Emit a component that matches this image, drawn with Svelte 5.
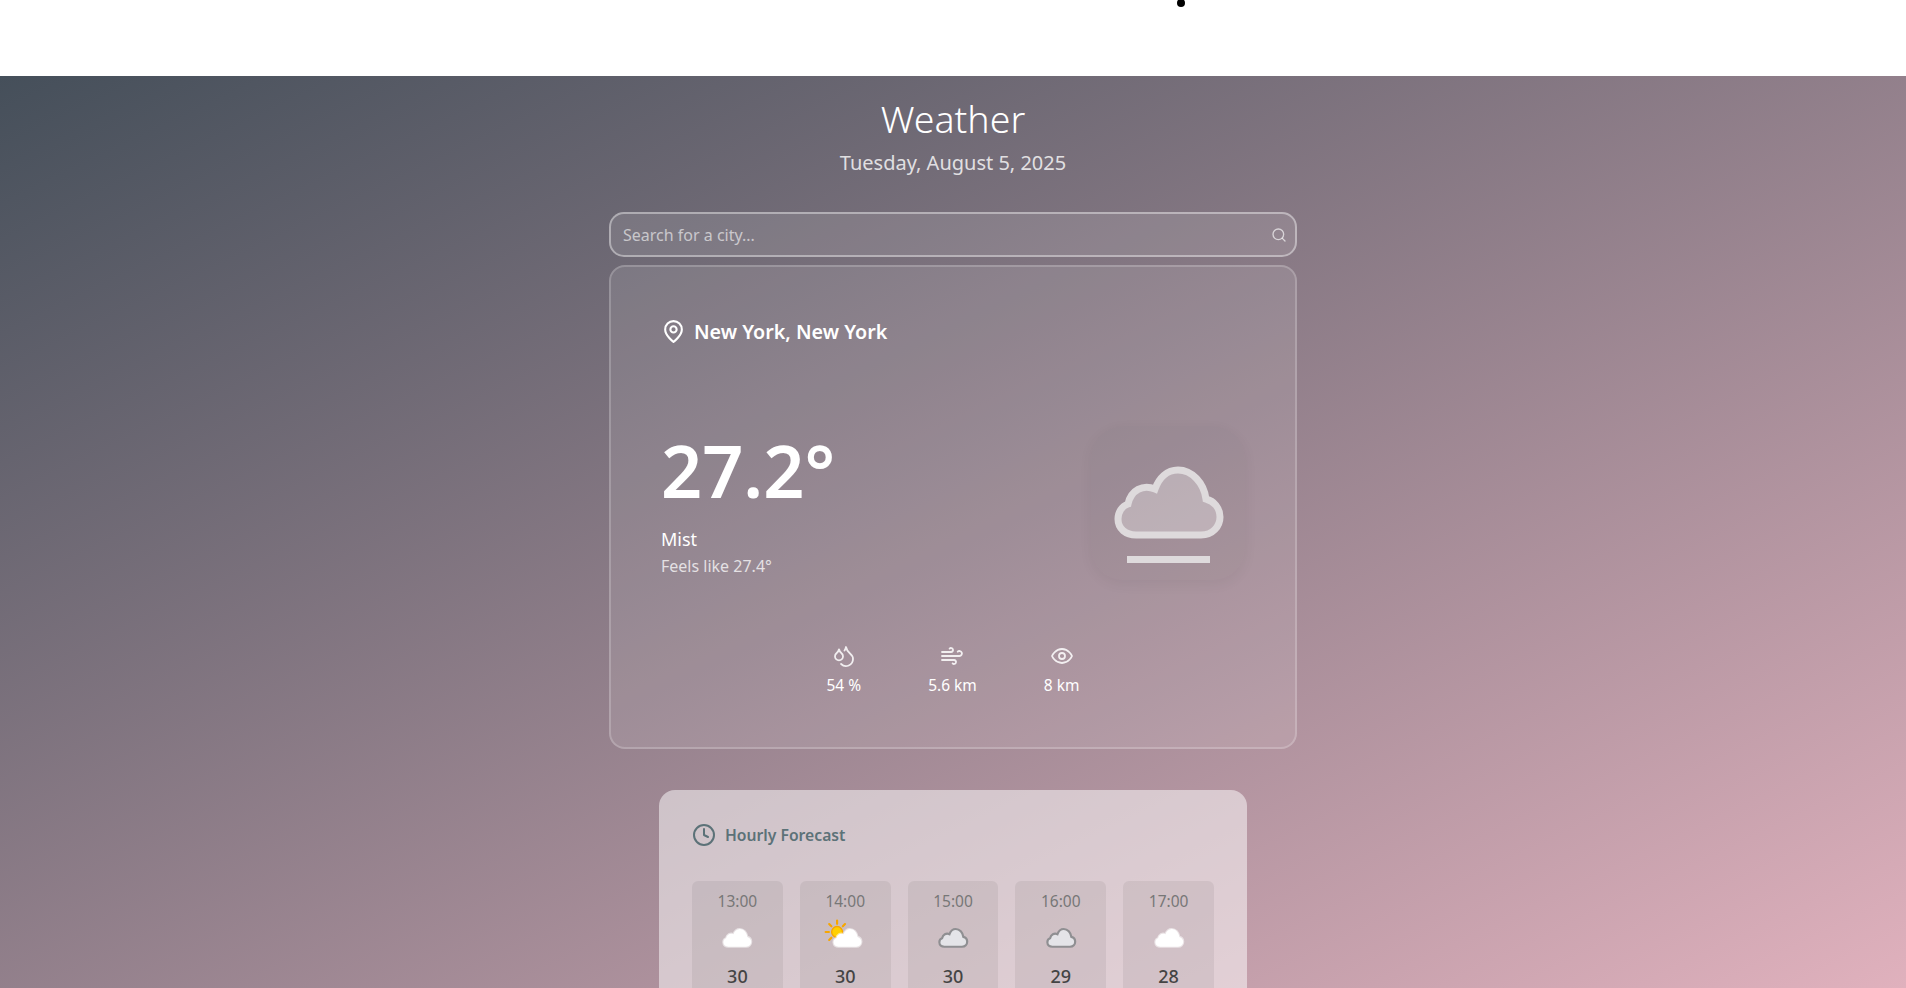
<script>
	const stats = [
		{ icon: "drop", label: "54 %" },
		{ icon: "wind", label: "5.6 km" },
		{ icon: "eye", label: "8 km" }
	];

	const hours = [
		{ time: "13:00", icon: "white", temp: 30 },
		{ time: "14:00", icon: "sun", temp: 30 },
		{ time: "15:00", icon: "grey", temp: 30 },
		{ time: "16:00", icon: "grey", temp: 29 },
		{ time: "17:00", icon: "white", temp: 28 }
	];

	const cloud = "M45 109H110C122 109 129 100 129 91C129 82 123 75 115 73C113 57 101 44 87 44C76 44 68 52 64 63C52 58 40 64 37 78C31 80 27 86 27 93C27 103 35 109 45 109Z";
</script>

<div class="page">
	<div class="topbar">
		<span class="dot"></span>
	</div>

	<main class="main">
		<header class="head">
			<h1>Weather</h1>
			<p>Tuesday, August 5, 2025</p>
		</header>

		<div class="search">
			<input type="text" placeholder="Search for a city..." />
			<svg class="search-icon" viewBox="0 0 24 24" fill="none" stroke="currentColor" stroke-width="2" stroke-linecap="round" stroke-linejoin="round">
				<circle cx="11" cy="11" r="8" />
				<path d="m21 21-4.3-4.3" />
			</svg>
		</div>

		<section class="card">
			<div class="location">
				<svg viewBox="0 0 24 24" fill="none" stroke="currentColor" stroke-width="2" stroke-linecap="round" stroke-linejoin="round">
					<path d="M20 10c0 6-8 12-8 12s-8-6-8-12a8 8 0 0 1 16 0Z" />
					<circle cx="12" cy="10" r="3" />
				</svg>
				<span>New York, New York</span>
			</div>

			<div class="now">
				<div class="now-text">
					<div class="temp">27.2°</div>
					<div class="cond">Mist</div>
					<div class="feels">Feels like 27.4°</div>
				</div>
				<div class="now-icon">
					<svg viewBox="0 0 154 154">
						<path d={cloud} fill="#fff" fill-opacity="0.3" stroke="#dedadc" stroke-width="7" />
						<rect x="36" y="130" width="83" height="7" fill="#dedadc" />
					</svg>
				</div>
			</div>

			<div class="stats">
				{#each stats as stat}
					<div class="stat">
						<svg viewBox="0 0 24 24" fill="none" stroke="currentColor" stroke-width="1.8" stroke-linecap="round" stroke-linejoin="round">
							{#if stat.icon === "drop"}
								<path d="M7 16.3c2.2 0 4-1.83 4-4.05 0-1.16-.57-2.26-1.71-3.19S7.29 6.75 7 5.3c-.29 1.45-1.14 2.84-2.29 3.76S3 11.1 3 12.25c0 2.22 1.8 4.05 4 4.05z" />
								<path d="M12.56 6.6A10.97 10.97 0 0 0 14 3.02c.5 2.5 2 4.9 4 6.5s3 3.5 3 5.5a6.98 6.98 0 0 1-11.91 4.97" />
							{:else if stat.icon === "wind"}
								<path d="M17.7 7.7a2.5 2.5 0 1 1 1.8 4.3H2" />
								<path d="M9.6 4.6A2 2 0 1 1 11 8H2" />
								<path d="M12.6 19.4A2 2 0 1 0 14 16H2" />
							{:else}
								<path d="M2 12s3-7 10-7 10 7 10 7-3 7-10 7-10-7-10-7Z" />
								<circle cx="12" cy="12" r="3" />
							{/if}
						</svg>
						<span>{stat.label}</span>
					</div>
				{/each}
			</div>
		</section>

		<section class="forecast">
			<div class="forecast-title">
				<svg viewBox="0 0 24 24" fill="none" stroke="currentColor" stroke-width="2" stroke-linecap="round" stroke-linejoin="round">
					<circle cx="12" cy="12" r="10" />
					<polyline points="12 6 12 12 16 14" />
				</svg>
				<span>Hourly Forecast</span>
			</div>
			<div class="hours">
				{#each hours as hour}
					<div class="hour">
						<div class="time">{hour.time}</div>
						<svg class="hour-icon" viewBox="0 0 154 154">
							{#if hour.icon === "sun"}
								<circle cx="48" cy="55" r="20" fill="#ffd000" stroke="#f7a600" stroke-width="5" />
								<path d="M48 25V13M27 34L19 26M18 55H6M69 34L77 26M27 76L19 84" stroke="#f7a600" stroke-width="8" stroke-linecap="round" />
							{/if}
							{#if hour.icon === "grey"}
								<path d={cloud} fill="#e4e4e8" stroke="#8f8f92" stroke-width="8" />
							{:else}
								<path d={cloud} fill="#fff" stroke="#fff" stroke-opacity="0.55" stroke-width="8" transform={hour.icon === "sun" ? "translate(8 0)" : ""} />
							{/if}
						</svg>
						<div class="hour-temp">{hour.temp}</div>
					</div>
				{/each}
			</div>
		</section>
	</main>
</div>

<style>
	:global(body) {
		margin: 0;
		font-family: "Noto Sans", "Open Sans", sans-serif;
	}

	.page {
		height: 100vh;
		overflow: hidden;
		display: flex;
		flex-direction: column;
		background: #fff;
	}

	.topbar {
		height: 76px;
		flex: none;
		position: relative;
	}

	.dot {
		position: absolute;
		left: 1177px;
		top: -1px;
		width: 8px;
		height: 8px;
		border-radius: 50%;
		background: #000;
	}

	.main {
		flex: 1;
		min-height: 0;
		overflow: hidden;
		display: flex;
		flex-direction: column;
		align-items: center;
		background: linear-gradient(to bottom right, #454f5a, #e0b1bd);
		color: #fff;
	}

	.head {
		flex: none;
		text-align: center;
		padding-top: 18px;
	}

	h1 {
		margin: 0;
		font-size: 37.5px;
		line-height: 50px;
		font-weight: 300;
	}

	.head p {
		margin: 4px 0 0;
		font-size: 20px;
		line-height: 30px;
		color: rgba(255, 255, 255, 0.8);
	}

	.search {
		margin-top: 34px;
		width: 688px;
		height: 45px;
		flex: none;
		position: relative;
	}

	input {
		width: 100%;
		height: 100%;
		box-sizing: border-box;
		padding: 0 40px 0 12px;
		border: 2px solid rgba(255, 255, 255, 0.4);
		border-radius: 15px;
		background: rgba(255, 255, 255, 0.1);
		font: inherit;
		font-size: 16px;
		color: #fff;
		outline: none;
	}

	input::placeholder {
		color: rgba(255, 255, 255, 0.6);
	}

	.search-icon {
		position: absolute;
		right: 10px;
		top: 15px;
		width: 16px;
		height: 16px;
		color: rgba(255, 255, 255, 0.65);
	}

	.card {
		margin-top: 8px;
		width: 688px;
		height: 484px;
		flex: none;
		box-sizing: border-box;
		padding: 51px 50px 0;
		border: 2px solid rgba(255, 255, 255, 0.2);
		border-radius: 16px;
		background: rgba(255, 255, 255, 0.1);
	}

	.location {
		display: flex;
		align-items: center;
		gap: 8px;
		font-size: 19.7px;
		font-weight: 600;
		height: 26px;
	}

	.location svg {
		width: 25px;
		height: 25px;
	}

	.now {
		margin-top: 82px;
		display: flex;
		justify-content: space-between;
		align-items: flex-start;
	}

	.temp {
		font-size: 72px;
		line-height: 84px;
		font-weight: 600;
		margin-top: 2px;
	}

	.cond {
		margin-top: 14px;
		font-size: 18px;
		line-height: 26px;
	}

	.feels {
		margin-top: 2px;
		font-size: 16px;
		line-height: 24px;
		color: rgba(255, 255, 255, 0.75);
	}

	.now-icon {
		width: 154px;
		height: 154px;
		border-radius: 32px;
		background: rgba(0, 0, 0, 0.02);
		box-shadow: 0 4px 14px rgba(0, 0, 0, 0.05);
	}

	.now-icon svg {
		width: 154px;
		height: 154px;
		display: block;
		filter: blur(0.6px);
	}

	.stats {
		margin-top: 64px;
		display: flex;
		justify-content: center;
		gap: 67px;
	}

	.stat {
		display: flex;
		flex-direction: column;
		align-items: center;
		gap: 6px;
		font-size: 15.5px;
		font-weight: 400;
		line-height: 22px;
	}

	.stat svg {
		width: 24px;
		height: 24px;
		color: rgba(255, 255, 255, 0.85);
	}

	.forecast {
		margin-top: 41px;
		width: 588px;
		flex: none;
		box-sizing: border-box;
		padding: 33px;
		border-radius: 16px;
		background: rgba(255, 255, 255, 0.5);
	}

	.forecast-title {
		display: flex;
		align-items: center;
		gap: 9px;
		height: 24px;
		font-size: 15.7px;
		font-weight: 600;
		color: #5c7278;
	}

	.forecast-title svg {
		width: 24px;
		height: 24px;
	}

	.hours {
		margin-top: 34px;
		display: grid;
		grid-template-columns: repeat(5, 1fr);
		gap: 17px;
	}

	.hour {
		display: flex;
		flex-direction: column;
		align-items: center;
		padding: 10px 0 16px;
		border-radius: 6px;
		background: rgba(0, 0, 0, 0.06);
	}

	.time {
		font-size: 15.5px;
		line-height: 20px;
		color: #777;
	}

	.hour-icon {
		width: 42px;
		height: 42px;
		margin-top: 6px;
		filter: blur(0.3px);
	}

	.hour-temp {
		margin-top: 5px;
		font-size: 18px;
		line-height: 24px;
		font-weight: 500;
		color: #444;
	}
</style>
